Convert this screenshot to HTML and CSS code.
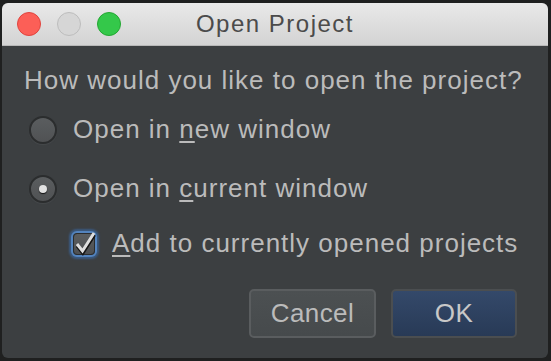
FILE: index.html
```html
<!DOCTYPE html>
<html>
<head>
  <meta charset="utf8">
  <title>Open Project</title>
  <link rel="stylesheet" href="styles.css">
</head>
<body>

<div class="dialog">
  <div class="title-bar">
    <div class="lights">
      <span class="light red"></span>
      <span class="light gray"></span>
      <span class="light green"></span>
    </div>
    <div class="title">Open Project</div>
  </div>

  <div class="content">
    <div class="question">How would you like to open the project?</div>

    <div class="option first">
      <span class="radio"></span>
      <label>Open in <u>n</u>ew window</label>
    </div>
    <div class="option second">
      <span class="radio checked"></span>
      <label>Open in <u>c</u>urrent window</label>
    </div>
    <div class="option sub">
      <span class="checkbox">
        <svg width="24" height="24" viewBox="0 0 24 24">
          <path d="M4 12 L9.5 19 L21 1" fill="none" stroke="#151515" stroke-width="3.6" transform="translate(0.3 1.8)"/>
          <path d="M4 12 L9.5 19 L21 1" fill="none" stroke="#dedede" stroke-width="3"/>
        </svg>
      </span>
      <label><u>A</u>dd to currently opened projects</label>
    </div>

    <div class="buttons">
      <button class="btn">Cancel</button>
      <button class="btn primary">OK</button>
    </div>
  </div>
</div>

</body>
</html>
```

FILE: styles.css
```css
html, body { margin: 0; padding: 0; }
body { background: #1f2020; width: 551px; height: 361px; overflow: hidden; font-family: "Liberation Sans", Arial, sans-serif; }

.dialog { margin: 3px 3px 0 2px; height: 355px; background: #3c3f41; border-radius: 6px 6px 6px 6px; overflow: hidden; display: flex; flex-direction: column; }

.title-bar { height: 42px; flex: none; display: flex; align-items: center; position: relative; background: linear-gradient(#e9e9e9, #d3d3d3); border-bottom: 1px solid #b8b8b8; }
.lights { display: flex; gap: 16px; padding-left: 15px; }
.light { width: 24px; height: 24px; border-radius: 50%; box-sizing: border-box; }
.light.red { background: #fc5f57; border: 1px solid #e0443e; }
.light.gray { background: #d6d6d6; border: 1px solid #bdbdbd; }
.light.green { background: #34c84a; border: 1px solid #24a732; }
.title { position: absolute; left: 0; right: 0; top: 0; bottom: 0; text-align: center; line-height: 42px; font-size: 24px; letter-spacing: 1.5px; color: #4b4b4b; }

.content { padding: 19px 31px 0 22px; color: #bbbbbb; font-size: 26px; letter-spacing: 1px; white-space: nowrap; }
.question { line-height: 30px; }

.option { display: flex; align-items: center; height: 40px; }
.option.first { margin-top: 15px; }
.option.second { margin-top: 19px; }
.option.sub { margin-top: 15px; padding-left: 49px; }
.option label { line-height: 30px; margin-top: -3px; }
.option u { text-decoration-thickness: 2px; text-underline-offset: 3px; }

.radio { width: 28px; height: 28px; margin-left: 5px; margin-right: 16px; border-radius: 50%; box-sizing: border-box; background: linear-gradient(#5a5d5f, #505254); border: 2px solid #2b2d2e; box-shadow: 0 1px 1px #46494b; position: relative; }
.radio.checked::after { content: ""; position: absolute; left: 8px; top: 8px; width: 8px; height: 8px; border-radius: 50%; background: #e2e2e2; box-shadow: 0 1px 1px #111; }

.checkbox { width: 22px; height: 22px; margin-right: 17px; box-sizing: border-box; border-radius: 4px; background: linear-gradient(#5a5d5f, #4e5052); border: 1px solid #2b2d2e; box-shadow: 0 0 0 2px #5383bd, 0 0 2px 4px #3b5a80; }
.checkbox svg { display: block; margin: -2px 0 0 -1px; overflow: visible; }

.buttons { display: flex; justify-content: flex-end; gap: 15px; margin-top: 25px; }
.btn { width: 127px; height: 49px; border-radius: 5px; font-family: "Liberation Sans", Arial, sans-serif; font-size: 26px; letter-spacing: 0.4px; color: #bbbbbb; background: linear-gradient(#4c5052, #464a4c); border: 2px solid #5a5d5f; padding: 0; }
.btn.primary { width: 126px; background: linear-gradient(#34496a, #283a56); border-color: #4b4e50; color: #c8c8c8; }
```
